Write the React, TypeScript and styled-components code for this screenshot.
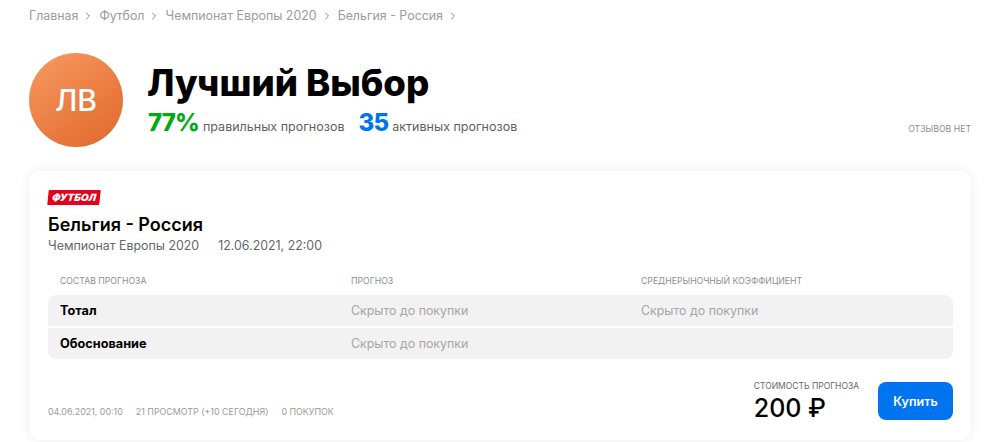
import styled, { createGlobalStyle } from "styled-components";
import { ChevronRight } from "lucide-react";

const GlobalStyle = createGlobalStyle`
  html, body {
    margin: 0;
    padding: 0;
    background: #fff;
    font-family: Inter, "Noto Sans", sans-serif;
  }
  * { box-sizing: border-box; }
`;

const Page = styled.div`
  width: 1000px;
  height: 442px;
  overflow: hidden;
  padding: 8px 29px 0;
`;

const Crumbs = styled.nav`
  display: flex;
  align-items: center;
  height: 15px;
  font-size: 12.4px;
  color: #9b9b9f;
`;

const Crumb = styled.span`
  display: flex;
  align-items: center;
`;

const CrumbArrow = styled(ChevronRight)`
  margin: 0 5px 0 4px;
  color: #86868a;
`;

const Header = styled.header`
  display: flex;
  align-items: center;
  margin-top: 30px;
  position: relative;
`;

const Avatar = styled.div`
  width: 94px;
  height: 94px;
  border-radius: 50%;
  background: linear-gradient(145deg, #f79a62, #e0672a);
  color: #fff;
  font-size: 30px;
  font-weight: 500;
  display: flex;
  align-items: center;
  justify-content: center;
  flex-shrink: 0;
`;

const HeaderInfo = styled.div`
  margin-left: 25px;
  padding-bottom: 1px;
`;

const Name = styled.h1`
  margin: 0 0 0 -1px;
  font-size: 36.6px;
  line-height: 44px;
  font-weight: 800;
  color: #000;
`;

const Stats = styled.div`
  display: flex;
  align-items: baseline;
  margin-top: 3px;
`;

const StatValue = styled.span<{ $color: string }>`
  font-size: 24px;
  line-height: 30px;
  font-weight: 800;
  letter-spacing: -0.8px;
  color: ${(p) => p.$color};
  margin-right: 4px;
`;

const StatLabel = styled.span`
  font-size: 12.5px;
  color: #5f5f64;
  margin-right: 14px;
`;

const Reviews = styled.span`
  position: absolute;
  right: 0;
  bottom: 13px;
  font-size: 8.7px;
  color: #8e8e92;
`;

const Card = styled.section`
  margin-top: 24px;
  height: 269px;
  padding: 19px 18px 0 19px;
  border-radius: 12px;
  background: #fff;
  box-shadow: 0 0 12px rgba(0, 0, 0, 0.08);
`;

const SportTag = styled.div`
  width: fit-content;
  padding: 0 4px;
  font-size: 10px;
  line-height: 15px;
  font-weight: 900;
  font-style: italic;
  color: #fff;
  background: #e2001a;
  border-radius: 1px;
  transform: skewX(-6deg);
`;

const MatchTitle = styled.h2`
  margin: 9px 0 0;
  font-size: 18px;
  line-height: 22px;
  font-weight: 600;
  color: #000;
`;

const MatchMeta = styled.div`
  display: flex;
  gap: 19px;
  margin-top: 2px;
  font-size: 12.4px;
  line-height: 16px;
  color: #66666c;
`;

const Columns = styled.div`
  display: grid;
  grid-template-columns: 291px 290px 1fr;
  align-items: center;
  padding-left: 12px;
`;

const TableHead = styled(Columns)`
  margin-top: 20px;
  height: 14px;
  font-size: 8.7px;
  color: #8e8e92;
`;

const Row = styled(Columns)<{ $first?: boolean }>`
  height: 31px;
  margin-top: ${(p) => (p.$first ? "7px" : "2px")};
  background: #f2f2f2;
  border-radius: ${(p) => (p.$first ? "8px 8px 0 0" : "0 0 8px 8px")};
`;

const RowName = styled.span`
  font-size: 12.7px;
  font-weight: 700;
  color: #000;
`;

const Hidden = styled.span`
  font-size: 12.4px;
  color: #a6a6a6;
`;

const Footer = styled.footer`
  display: flex;
  align-items: flex-start;
  margin-top: 23px;
`;

const FootStats = styled.div`
  display: flex;
  gap: 13px;
  margin-top: 24px;
  font-size: 8.9px;
  line-height: 12px;
  color: #9a9a9e;
`;

const Price = styled.div`
  margin: -2px 19px 0 auto;
`;

const PriceLabel = styled.div`
  font-size: 8.5px;
  line-height: 12px;
  color: #66666c;
`;

const PriceValue = styled.div`
  font-size: 25px;
  line-height: 28px;
  font-weight: 500;
  color: #000;
  margin-top: 2px;
`;

const BuyButton = styled.button`
  width: 75px;
  height: 38px;
  border: 0;
  border-radius: 8px;
  background: #0074ee;
  color: #fff;
  font-family: inherit;
  font-size: 12.5px;
  font-weight: 600;
`;

const crumbs = ["Главная", "Футбол", "Чемпионат Европы 2020", "Бельгия - Россия"];

const rows = [
  { name: "Тотал", forecast: "Скрыто до покупки", odds: "Скрыто до покупки" },
  { name: "Обоснование", forecast: "Скрыто до покупки", odds: "" },
];

export default function App() {
  return (
    <Page>
      <GlobalStyle />
      <Crumbs>
        {crumbs.map((c) => (
          <Crumb key={c}>
            {c}
            <CrumbArrow size={12} strokeWidth={2} />
          </Crumb>
        ))}
      </Crumbs>

      <Header>
        <Avatar>ЛВ</Avatar>
        <HeaderInfo>
          <Name>Лучший Выбор</Name>
          <Stats>
            <StatValue $color="#00aa13">77%</StatValue>
            <StatLabel>правильных прогнозов</StatLabel>
            <StatValue $color="#0074ee">35</StatValue>
            <StatLabel>активных прогнозов</StatLabel>
          </Stats>
        </HeaderInfo>
        <Reviews>ОТЗЫВОВ НЕТ</Reviews>
      </Header>

      <Card>
        <SportTag>ФУТБОЛ</SportTag>
        <MatchTitle>Бельгия - Россия</MatchTitle>
        <MatchMeta>
          <span>Чемпионат Европы 2020</span>
          <span>12.06.2021, 22:00</span>
        </MatchMeta>

        <TableHead>
          <span>СОСТАВ ПРОГНОЗА</span>
          <span>ПРОГНОЗ</span>
          <span>СРЕДНЕРЫНОЧНЫЙ КОЭФФИЦИЕНТ</span>
        </TableHead>
        {rows.map((r, i) => (
          <Row key={r.name} $first={i === 0}>
            <RowName>{r.name}</RowName>
            <Hidden>{r.forecast}</Hidden>
            <Hidden>{r.odds}</Hidden>
          </Row>
        ))}

        <Footer>
          <FootStats>
            <span>04.06.2021, 00:10</span>
            <span>21 ПРОСМОТР (+10 СЕГОДНЯ)</span>
            <span>0 ПОКУПОК</span>
          </FootStats>
          <Price>
            <PriceLabel>СТОИМОСТЬ ПРОГНОЗА</PriceLabel>
            <PriceValue>200 ₽</PriceValue>
          </Price>
          <BuyButton>Купить</BuyButton>
        </Footer>
      </Card>
    </Page>
  );
}
